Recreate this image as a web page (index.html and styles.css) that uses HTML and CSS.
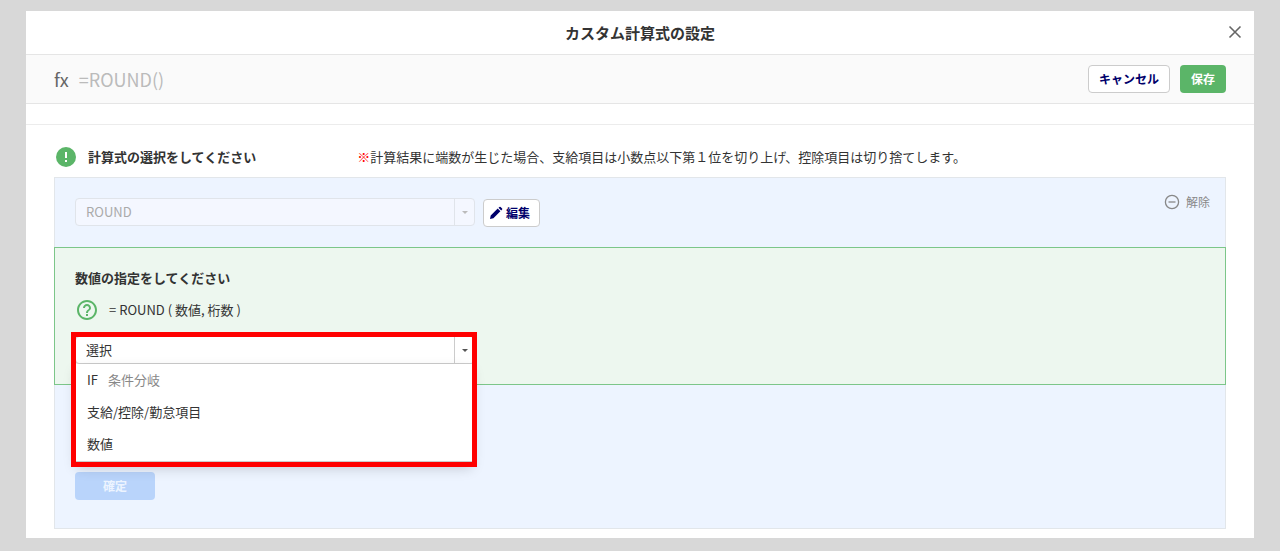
FILE: index.html
```html
<!DOCTYPE html>
<html lang="ja">
<head>
    <meta charset="UTF-8">
    <meta name="viewport" content="width=device-width, initial-scale=1.0">
    <title>カスタム計算式の設定</title>
    <link rel="stylesheet" href="styles.css">
</head>
<body>

<main class="dialog" role="dialog" aria-labelledby="dialogTitle">
    <header class="dialog-header">
        <h1 id="dialogTitle">カスタム計算式の設定</h1>
        <button type="button" class="close" aria-label="閉じる">
            <svg width="14" height="14" viewBox="0 0 14 14"><path d="M1.5 1.5l11 11M12.5 1.5l-11 11" stroke="#666" stroke-width="1.6" fill="none"/></svg>
        </button>
    </header>

    <div class="toolbar">
        <div class="formula"><span class="fx">fx</span><span class="formula-text">=ROUND()</span></div>
        <button type="button" class="btn btn-outline">キャンセル</button>
        <button type="button" class="btn btn-save">保存</button>
    </div>
    <div class="spacer"></div>

    <div class="content">
        <div class="guide">
            <svg width="22" height="22" viewBox="0 0 22 22"><circle cx="11" cy="11" r="10" fill="#5bb568"/><path d="M11 6v6M11 14v2" stroke="#fff" stroke-width="2"/></svg>
            <h2><label for="formulaType">計算式の選択をしてください</label></h2>
            <p class="note"><span class="mark">※</span>計算結果に端数が生じた場合、支給項目は小数点以下第１位を切り上げ、控除項目は切り捨てします。</p>
        </div>

        <section class="panel">
            <div class="panel-top">
                <div class="select-box disabled">
                    <select id="formulaType" disabled>
                        <option>ROUND</option>
                    </select>
                    <span class="caret"></span>
                </div>
                <button type="button" class="btn btn-outline btn-edit">
                    <svg width="14" height="14" viewBox="0 0 14 14"><path d="M1 13l.7-3.4 7-7 2.700 2.700-7 7zM9.500 1.800l.9-.9q.6-.5 1.200 0l1.500 1.500q.5.600 0 1.200l-.9.900z" fill="#00006b"/></svg>
                    編集
                </button>
                <button type="button" class="release">
                    <svg width="16" height="16" viewBox="0 0 16 16"><circle cx="8" cy="8" r="6.600" fill="none" stroke="#888" stroke-width="1.300"/><path d="M4.500 8h7" stroke="#888" stroke-width="1.300"/></svg>
                    解除
                </button>
            </div>

            <div class="step">
                <h2><label for="valueType">数値の指定をしてください</label></h2>
                <p class="syntax">
                    <svg width="24" height="24" viewBox="0 0 24 24" fill="#5bb568"><path d="M11 18h2v-2h-2v2zm1-16C6.480 2 2 6.480 2 12s4.480 10 10 10 10-4.480 10-10S17.520 2 12 2zm0 18c-4.410 0-8-3.590-8-8s3.590-8 8-8 8 3.590 8 8-3.590 8-8 8zm0-14c-2.210 0-4 1.790-4 4h2c0-1.100.9-2 2-2s2 .9 2 2c0 2-3 1.750-3 5h2c0-2.250 3-2.500 3-5 0-2.210-1.790-4-4-4z"/></svg>
                    <span>= ROUND ( 数値, 桁数 )</span>
                </p>
                <div class="select-box">
                    <select id="valueType">
                        <option>選択</option>
                    </select>
                    <span class="caret"></span>
                    <ul class="menu">
                        <li><button type="button">IF<span class="hint">条件分岐</span></button></li>
                        <li><button type="button">支給/控除/勤怠項目</button></li>
                        <li><button type="button">数値</button></li>
                    </ul>
                    <div class="highlight"></div>
                </div>
            </div>

            <div class="panel-bottom">
                <button type="button" class="btn btn-confirm" disabled>確定</button>
            </div>
        </section>
    </div>
</main>

</body>
</html>
```

FILE: styles.css
```css
* {
    box-sizing: border-box;
}
body {
    margin: 0;
    padding: 11px 26px 13px;
    background: #d8d8d8;
    color: #333;
    font-family: "Noto Sans CJK JP", sans-serif;
    font-size: 13px;
    line-height: 20px;
}
h1, h2, p, ul {
    margin: 0;
    padding: 0;
}
button, select {
    font-family: inherit;
    font-size: 13px;
    line-height: 20px;
    color: inherit;
}
button {
    cursor: pointer;
}
svg {
    flex: none;
}
.dialog {
    background: #fff;
}
.dialog-header {
    position: relative;
    padding: 12px 48px 11px;
    border-bottom: 1px solid #e5e5e5;
    text-align: center;
}
h1 {
    font-size: 15px;
    line-height: 20px;
}
h2 {
    font-size: 13px;
    line-height: 20px;
}
.close {
    position: absolute;
    top: 10px;
    right: 8px;
    display: flex;
    padding: 4px;
    border: 0;
    background: none;
}
.toolbar {
    display: flex;
    align-items: center;
    gap: 10px;
    padding: 10px 28px;
    background: #fafafa;
    border-bottom: 1px solid #e5e5e5;
}
.formula {
    display: flex;
    gap: 10px;
    flex: 1;
    font-size: 18px;
}
.fx {
    color: #666;
}
.formula-text {
    color: #bbb;
}
.btn {
    display: flex;
    align-items: center;
    justify-content: center;
    height: 28px;
    padding: 0 10px;
    border: 1px solid transparent;
    border-radius: 4px;
    font-size: 12px;
    font-weight: bold;
}
.btn-outline {
    background: #fff;
    border-color: #ccc;
    color: #00006b;
}
.btn-save {
    background: #5bb568;
    color: #fff;
}
.spacer {
    height: 21px;
    border-bottom: 1px solid #ececec;
}
.content {
    padding: 21px 28px 9px;
}
.guide {
    display: flex;
    align-items: center;
    gap: 11px;
    margin-bottom: 9px;
    padding-left: 1px;
}
.note {
    margin-left: 90px;
}
.mark {
    color: #f00;
}
.panel {
    background: #edf4ff;
    border: 1px solid #e2e6ea;
}
.panel-top {
    display: flex;
    align-items: flex-start;
    gap: 8px;
    padding: 20px 15px 20px 20px;
}
.select-box {
    position: relative;
    display: flex;
    width: 400px;
    height: 28px;
    background: #fff;
    border: 1px solid #ccc;
    border-radius: 4px;
}
.select-box select {
    appearance: none;
    flex: 1;
    padding: 0 10px;
    border: 0;
    background: none;
    outline: none;
}
.caret {
    display: flex;
    align-items: center;
    justify-content: center;
    width: 20px;
    border-left: 1px solid #ccc;
}
.caret::after {
    content: "";
    border: 3px solid transparent;
    border-top-color: #555;
    border-bottom: 0;
}
.disabled {
    background: #f4f7ff;
    border-color: #e0e4ea;
}
.disabled select {
    color: #aaa;
    opacity: 1;
}
.disabled .caret {
    border-color: #e0e4ea;
}
.disabled .caret::after {
    border-top-color: #bbb;
}
.btn-edit {
    gap: 3px;
    margin-top: 1px;
    padding: 0 9px 0 5px;
}
.release {
    display: flex;
    align-items: center;
    gap: 6px;
    margin-top: -6px;
    margin-left: auto;
    padding: 0;
    border: 0;
    background: none;
    color: #888;
    font-size: 12px;
}
.step {
    margin: 0 -1px;
    padding: 20px;
    background: #edf7ef;
    border: 1px solid #7cc689;
}
.syntax {
    display: flex;
    align-items: center;
    gap: 10px;
    margin: 10px 0 14px;
}
/* 開いた状態のプルダウン */
.menu {
    position: absolute;
    top: 27px;
    left: 0;
    right: 2px;
    z-index: 1;
    padding-bottom: 1px;
    list-style: none;
    background: #fff;
    border-bottom: 1px solid #ccc;
    box-shadow: 0 6px 12px rgba(0, 0, 0, 0.18);
}
.menu button {
    display: flex;
    gap: 10px;
    width: 100%;
    padding: 6px 11px;
    border: 0;
    background: none;
}
.hint {
    color: #888;
}
.highlight {
    position: absolute;
    top: -5px;
    left: -5px;
    z-index: 2;
    width: 406px;
    height: 135px;
    border: 5px solid #f00;
    pointer-events: none;
}
.panel-bottom {
    padding: 87px 20px 28px;
}
.btn-confirm {
    width: 80px;
    background: #b9d4fb;
    color: #edf4ff;
}
```
